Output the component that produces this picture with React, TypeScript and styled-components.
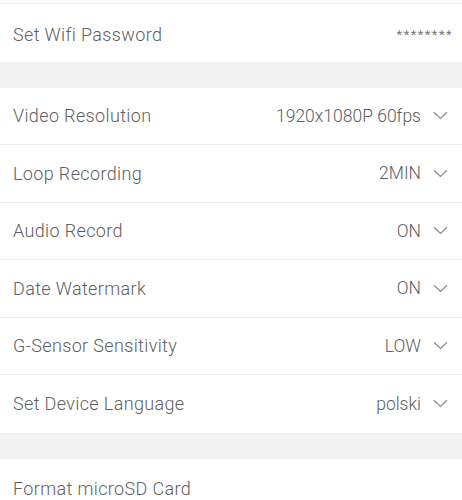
import React from 'react';
import styled, { createGlobalStyle } from 'styled-components';

const Global = createGlobalStyle`
	body {
		margin: 0;
		background: #ffffff;
		font-family: Roboto, "Liberation Sans", sans-serif;
	}
`;

type Setting = {
	label: string;
	value?: string;
	select?: boolean;
};

const Page = styled.div`
	display: flex;
	flex-direction: column;
	width: 462px;
	height: 500px;
	overflow: hidden;
	& > * {
		flex-shrink: 0;
	}
`;

const TopEdge = styled.div`
	height: 3px;
	border-bottom: 1px solid #ededed;
`;

const Group = styled.div`
	display: flex;
	flex-direction: column;
`;

const Spacer = styled.div`
	height: 26px;
	background: #f2f2f2;
`;

const Row = styled.div<{ $last?: boolean; $dropTop?: number }>`
	display: flex;
	align-items: center;
	justify-content: space-between;
	box-sizing: border-box;
	height: 57.5px;
	padding: ${(p) => p.$dropTop || 0}px 14px 0 13px;
	border-bottom: ${(p) => (p.$last ? 'none' : '1px solid #ededed')};
	flex-shrink: 0;
`;

const Label = styled.span`
	font-size: 18px;
	font-weight: 300;
	letter-spacing: 0.36px;
	color: #606060;
`;

const Value = styled.span`
	display: flex;
	align-items: center;
	gap: 12px;
	font-size: 17.5px;
	font-weight: 300;
	color: #606060;
`;

const Masked = styled.span`
	font-size: 13px;
	color: #7a7a7a;
	letter-spacing: 1.45px;
	margin-right: -5px;
`;

const Chevron = () => (
	<svg width="15" height="9" viewBox="0 0 15 9" fill="none">
		<path d="M1 1.2 L7.5 7.5 L14 1.2" stroke="#8a8a8a" strokeWidth="1.2" />
	</svg>
);

const recording: Array<Setting> = [
	{ label: 'Video Resolution', value: '1920x1080P 60fps', select: true },
	{ label: 'Loop Recording', value: '2MIN', select: true },
	{ label: 'Audio Record', value: 'ON', select: true },
	{ label: 'Date Watermark', value: 'ON', select: true },
	{ label: 'G-Sensor Sensitivity', value: 'LOW', select: true },
	{ label: 'Set Device Language', value: 'polski', select: true },
];

const App = () => {
	return (
		<Page>
			<Global />
			<TopEdge />
			<Group>
				<Row $last $dropTop={4}>
					<Label>Set Wifi Password</Label>
					<Masked>********</Masked>
				</Row>
			</Group>
			<Spacer />
			<Group>
				{recording.map((s, i) => (
					<Row key={s.label} $last={i === recording.length - 1}>
						<Label>{s.label}</Label>
						<Value>
							{s.value}
							{s.select && <Chevron />}
						</Value>
					</Row>
				))}
			</Group>
			<Spacer />
			<Group>
				<Row $last $dropTop={2}>
					<Label>Format microSD Card</Label>
				</Row>
			</Group>
		</Page>
	);
};

export default App;
